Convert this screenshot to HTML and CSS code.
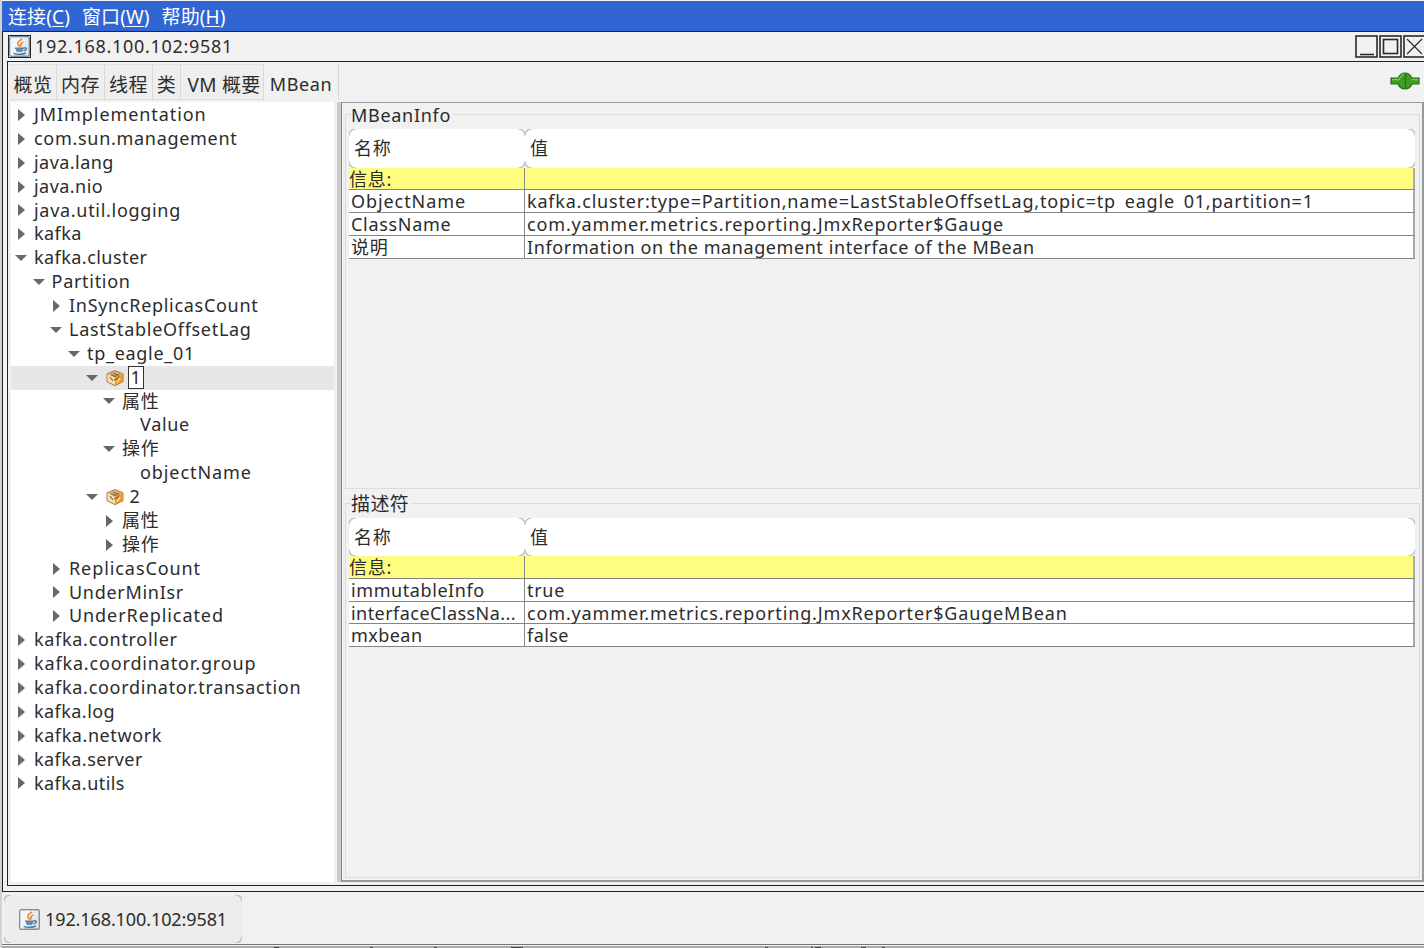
FILE: index.html
```
<!DOCTYPE html>
<html lang="zh">
<head>
    <meta charset="utf-8">
    <title>192.168.100.102:9581</title>
    <link rel="stylesheet" href="styles.css">
</head>
<body>
    <!-- shared icons -->
    <svg class="defs" width="0" height="0">
        <symbol id="java" viewBox="0 0 21 21">
            <rect x="0.7" y="0.7" width="19.6" height="19.6" rx="1.5" fill="#e3ebf1" stroke="#7891a8" stroke-width="1.4"/>
            <path d="M1.5 1.5H16L5 19.5H1.5z" fill="#fff" opacity="0.6"/>
            <path d="M13.2 3C9.5 5 8 6.2 9 8.2L10.5 10.4M14.3 6C11.5 7 11.5 8.2 12 9L11.3 10.8" fill="none" stroke="#ee8a3a" stroke-width="1.7"/>
            <path d="M6 12.2H14.5M7 14.3H14M14.5 12.2C18 10.8 18.6 14 14.6 14.7M4.5 17.4C8 18.7 14 18.6 17 17" fill="none" stroke="#507a9e" stroke-width="1.5"/>
            <path d="M7 12.5H14L13 16H8z" fill="#6a8eac"/>
        </symbol>
        <symbol id="bean" viewBox="0 0 18 16">
            <path d="M9 0.6L17 3.8V11.7L9 15.6L1 11.7V3.8z" fill="#f3c173" stroke="#94764a" stroke-width="1"/>
            <path d="M9 7.5L16.6 4V11.5L9 15.2z" fill="#f39a20"/>
            <path d="M1.5 4.2L9 7.5V15L1.5 11.4z" fill="#f6ddae"/>
            <path d="M1.6 4L9 7.4L16.4 4L9 1.2z" fill="#ddb372"/>
            <path d="M5 4.5L9 6.5L13 4M7.5 3L11 5M4 7L7 11M8 9.5C10 10 13 8.5 13 5.5" fill="none" stroke="#86683e" stroke-width="1.1"/>
            <path d="M11 12.5L14 8" stroke="#fff0cf" stroke-width="1.3"/>
        </symbol>
    </svg>

    <div class="menubar">
        <span>连接(<u>C</u>)</span>
        <span>窗口(<u>W</u>)</span>
        <span>帮助(<u>H</u>)</span>
    </div>

    <div class="frame">
        <div class="titlebar">
            <svg class="title-icon"><use href="#java"/></svg>
            <span class="title">192.168.100.102:9581</span>
            <div class="buttons">
                <svg viewBox="0 0 23 23"><rect x="1" y="1" width="21" height="21"/><path d="M5 19.5H19"/></svg>
                <svg viewBox="0 0 23 23"><rect x="1" y="1" width="21" height="21"/><rect x="4.5" y="4.5" width="14" height="14"/></svg>
                <svg viewBox="0 0 23 23"><rect x="1" y="1" width="21" height="21"/><path class="thin" d="M4 4L19 19M19 4L4 19"/></svg>
            </div>
        </div>

        <div class="content">
            <div class="tabs">
                <div class="tab t1">概览</div>
                <div class="tab t2">内存</div>
                <div class="tab t3">线程</div>
                <div class="tab t4">类</div>
                <div class="tab t5">VM 概要</div>
                <div class="tab t6 active">MBean</div>
                <svg class="plug" viewBox="0 0 30 18">
                    <path d="M1 6.2H8C9.5 2.5 12 1 15 1S20.5 2.5 22 6.2H29V12H22C20.5 15.6 18 17 15 17S9.5 15.6 8 12H1z" fill="#3f9e22" stroke="#287015" stroke-width="1.2"/>
                    <path d="M2 7.7H9C10.5 4 12 2.6 14 2.3M21.5 7.7H28" fill="none" stroke="#7cc75f" stroke-width="1.3"/>
                    <path d="M15.5 1.5V16.5" stroke="#2a7018" stroke-width="1.3"/>
                </svg>
            </div>

            <div class="split">
                <div class="tree">
                    <div class="row l0"><i class="closed"></i><span class="wide">JMImplementation</span></div>
                    <div class="row l0"><i class="closed"></i><span>com.sun.management</span></div>
                    <div class="row l0"><i class="closed"></i><span class="tight">java.lang</span></div>
                    <div class="row l0"><i class="closed"></i><span class="tight">java.nio</span></div>
                    <div class="row l0"><i class="closed"></i><span>java.util.logging</span></div>
                    <div class="row l0"><i class="closed"></i><span class="tight">kafka</span></div>
                    <div class="row l0"><i class="open"></i><span class="tight">kafka.cluster</span></div>
                    <div class="row l1"><i class="open"></i><span>Partition</span></div>
                    <div class="row l2"><i class="closed"></i><span>InSyncReplicasCount</span></div>
                    <div class="row l2"><i class="open"></i><span>LastStableOffsetLag</span></div>
                    <div class="row l3"><i class="open"></i><span>tp_eagle_01</span></div>
                    <div class="row l4 selected"><i class="open"></i><svg class="bean"><use href="#bean"/></svg><span class="focus">1</span></div>
                    <div class="row l5"><i class="open"></i><span>属性</span></div>
                    <div class="row l6"><i></i><span>Value</span></div>
                    <div class="row l5"><i class="open"></i><span>操作</span></div>
                    <div class="row l6"><i></i><span class="wide">objectName</span></div>
                    <div class="row l4"><i class="open"></i><svg class="bean"><use href="#bean"/></svg><span>2</span></div>
                    <div class="row l5"><i class="closed"></i><span>属性</span></div>
                    <div class="row l5"><i class="closed"></i><span>操作</span></div>
                    <div class="row l2"><i class="closed"></i><span class="wide">ReplicasCount</span></div>
                    <div class="row l2"><i class="closed"></i><span>UnderMinIsr</span></div>
                    <div class="row l2"><i class="closed"></i><span class="wide">UnderReplicated</span></div>
                    <div class="row l0"><i class="closed"></i><span>kafka.controller</span></div>
                    <div class="row l0"><i class="closed"></i><span class="package">kafka.coordinator.group</span></div>
                    <div class="row l0"><i class="closed"></i><span>kafka.coordinator.transaction</span></div>
                    <div class="row l0"><i class="closed"></i><span class="tight">kafka.log</span></div>
                    <div class="row l0"><i class="closed"></i><span class="sentence">kafka.network</span></div>
                    <div class="row l0"><i class="closed"></i><span class="tight">kafka.server</span></div>
                    <div class="row l0"><i class="closed"></i><span class="tight">kafka.utils</span></div>
                </div>
                <div class="divider"></div>
                <div class="details">
                    <div class="group">
                        <div class="legend"><span>MBeanInfo</span></div>
                        <div class="group-body">
                            <div class="thead"><div class="th name">名称</div><div class="th value">值</div></div>
                            <div class="tr info"><div class="name">信息:</div><div class="value"></div></div>
                            <div class="tr"><div class="name wide">ObjectName</div><div class="value long">kafka.cluster:type=Partition,name=LastStableOffsetLag,topic=tp<span class="cut">_</span>eagle<span class="cut">_</span>01,partition=1</div></div>
                            <div class="tr"><div class="name">ClassName</div><div class="value package">com.yammer.metrics.reporting.JmxReporter$Gauge</div></div>
                            <div class="tr"><div class="name">说明</div><div class="value sentence">Information on the management interface of the MBean</div></div>
                        </div>
                    </div>
                    <div class="group">
                        <div class="legend cjk"><span>描述符</span></div>
                        <div class="group-body">
                            <div class="thead"><div class="th name">名称</div><div class="th value">值</div></div>
                            <div class="tr info"><div class="name">信息:</div><div class="value"></div></div>
                            <div class="tr"><div class="name sentence">immutableInfo</div><div class="value">true</div></div>
                            <div class="tr"><div class="name tight">interfaceClassNa...</div><div class="value package">com.yammer.metrics.reporting.JmxReporter$GaugeMBean</div></div>
                            <div class="tr"><div class="name tight">mxbean</div><div class="value tight">false</div></div>
                        </div>
                    </div>
                </div>
            </div>
        </div>
    </div>

    <div class="taskbar">
        <div class="task th">
            <svg class="task-icon"><use href="#java"/></svg>
            <span>192.168.100.102:9581</span>
        </div>
    </div>
    <svg class="edge" viewBox="0 0 1424 4">
        <path d="M2 0.5H1424" stroke="#777"/>
        <path d="M2 3H1424" stroke="#aaa" stroke-width="2"/>
        <path d="M274 3.5h5M370 3.5h3M434 3.5h3M511 3.5h12M765 3.5h3M811 3.5h2M815 3.5h6M861 3.5h5M882 3.5h3" stroke="#444"/>
    </svg>
</body>
</html>
```
FILE: styles.css
```
* {
    box-sizing: border-box;
}

body {
    margin: 0;
    width: 1424px;
    height: 948px;
    padding-top: 1px;
    overflow: hidden;
    background: #f1f1f1;
    border-left: 2px solid #d2d2d2;
    color: #2c2c2c;
    font: 18px/24px "Noto Sans", "Noto Sans CJK SC", sans-serif;
    letter-spacing: 0.7px;
    white-space: nowrap;
    display: flex;
    flex-direction: column;
}

.defs {
    position: absolute;
}

.menubar {
    height: 31px;
    padding: 4px 0 0 6px;
    display: flex;
    gap: 12px;
    background: #3165d3;
    border-bottom: 1px solid #17284c;
    color: #fff;
    font-size: 19px;
    letter-spacing: 0.1px;
}

.menubar u {
    text-underline-offset: 2px;
    text-decoration-thickness: 1px;
}

.frame {
    height: 860px;
    border: 1px solid #222;
    border-width: 0 0 1px 1px;
    padding: 0 0 5px 4px;
    display: flex;
    flex-direction: column;
}

.titlebar {
    height: 29px;
    display: flex;
    align-items: center;
    padding: 0 0 1px 1px;
}

.title-icon {
    width: 23px;
    height: 23px;
    border: 1px solid #222;
    margin-right: 4px;
}

.buttons {
    margin-left: auto;
    display: flex;
    gap: 1px;
    margin-right: -2px;
}

.buttons svg {
    width: 23px;
    height: 23px;
    fill: none;
    stroke: #2a2a2a;
    stroke-width: 1.6;
}

.buttons .thin {
    stroke-width: 1.2;
}

.content {
    flex: 1;
    border: 1px solid #222;
    border-width: 1px 0 1px 1px;
    display: flex;
    flex-direction: column;
}

.tabs {
    height: 40px;
    padding: 2px 0 0 2px;
    display: flex;
}

.tab {
    height: 36px;
    line-height: 41px;
    text-align: center;
    border-right: 1px solid #d8d8d8;
    border-bottom: 1px solid #dcdcdc;
    border-top: 1px solid #e2e2e2;
    background: #eee;
    font-size: 19px;
    letter-spacing: 0.6px;
}

.t1 { width: 47px; }
.t2 { width: 48px; }
.t3 { width: 48px; }
.t4 { width: 28px; }
.t5 { width: 83px; padding-left: 4px; letter-spacing: 0.3px; }
.t6 { width: 75px; font-size: 18px; }

.tab.active {
    background: #f1f1f1;
    border-bottom: none;
    border-top: none;
}

.plug {
    width: 30px;
    height: 18px;
    margin: 8px 4px 0 auto;
}

.split {
    flex: 1;
    display: flex;
    padding: 0 0 3px 3px;
}

.tree {
    width: 323px;
    background: #fff;
    padding-top: 1px;
}

.row {
    height: 23.89px;
    line-height: 23.89px;
    display: flex;
    align-items: center;
}

.l0 { padding-left: 4px; }
.l1 { padding-left: 21.6px; }
.l2 { padding-left: 39px; }
.l3 { padding-left: 57px; }
.l4 { padding-left: 74.5px; }
.l5 { padding-left: 92px; }
.l6 { padding-left: 110px; }

.row i {
    width: 12px;
    margin-right: 7px;
    display: flex;
    justify-content: center;
}

.row i::before {
    content: "";
    border: 0 solid transparent;
}

.row .closed::before {
    border-width: 6px 0 6px 7px;
    border-left-color: #686868;
}

.row .open::before {
    border-width: 6px 6px 0 6px;
    border-top-color: #686868;
}

.selected {
    background: #e7e7e7;
}

.tight {
    letter-spacing: 0.45px;
}

.wide {
    letter-spacing: 0.92px;
}

.bean {
    width: 18px;
    height: 16px;
    margin: 0 6px 0 1px;
}

.focus {
    width: 16px;
    height: 23px;
    line-height: 20px;
    margin-left: -2px;
    padding-left: 2px;
    border: 1px solid #333;
    background: #fff;
}

.divider {
    width: 8px;
    border-left: 3px solid #f0f0f0;
    border-right: 1px solid #888;
    background: #ccc;
}

.details {
    width: 1082px;
    border: 1px solid #999;
    border-width: 1px 2px 2px 0;
    padding: 0 2px 0 3px;
}

.group {
    height: 388.5px;
}

.legend {
    height: 24px;
    line-height: 24px;
    display: flex;
    padding-left: 6px;
}

.legend.cjk {
    font-size: 19px;
    letter-spacing: 0.4px;
}

.legend span {
    position: relative;
    background: #f1f1f1;
    padding-right: 2px;
}

.group-body {
    height: 375px;
    margin-top: -13px;
    padding: 14px 4px 0 3px;
    border: 1px solid #dcdcdc;
}

.thead {
    display: flex;
    height: 38.8px;
    line-height: 38px;
    background: #fff;
}

/* header cells only show the rounded ends of their outline */
.th {
    background:
        radial-gradient(circle at 100% 100%, transparent 6px, #bbb 7px, transparent 9px) 0 0 / 7px 7px no-repeat,
        radial-gradient(circle at 0 100%, transparent 6px, #bbb 7px, transparent 9px) 100% 0 / 7px 7px no-repeat,
        radial-gradient(circle at 100% 0, transparent 6px, #bbb 7px, transparent 9px) 0 100% / 7px 7px no-repeat,
        radial-gradient(circle at 0 0, transparent 6px, #bbb 7px, transparent 9px) 100% 100% / 7px 7px no-repeat;
}

.name {
    width: 176px;
}

.value {
    flex: 1;
}

.thead .th {
    padding-left: 5px;
}

.tr {
    height: 22.7px;
    line-height: 22px;
    display: flex;
    background: #fff;
    border-bottom: 1px solid #858585;
}

.tr div {
    border-right: 1px solid #888;
    padding-left: 2px;
}

.tr .value {
    border-right-width: 2px;
    border-right-color: #aaa;
}

/* underscores fall below the visible part of the cell */
.cut {
    color: transparent;
}

.tr.info {
    background: #fffd7f;
}

.tr.info .name {
    padding-left: 0;
}

.long {
    letter-spacing: 0.8px;
}

.package {
    letter-spacing: 0.85px;
}

.sentence {
    letter-spacing: 0.58px;
}

.taskbar {
    height: 52px;
    padding: 3px 0 0 2px;
}

.task {
    width: 238px;
    height: 48px;
    padding-left: 15px;
    display: flex;
    align-items: center;
    background-color: #ededed;
    letter-spacing: -0.1px;
}

.task-icon {
    width: 21px;
    height: 21px;
    margin-right: 5px;
}

.edge {
    width: 1424px;
    height: 4px;
    margin-left: -2px;
}
```
